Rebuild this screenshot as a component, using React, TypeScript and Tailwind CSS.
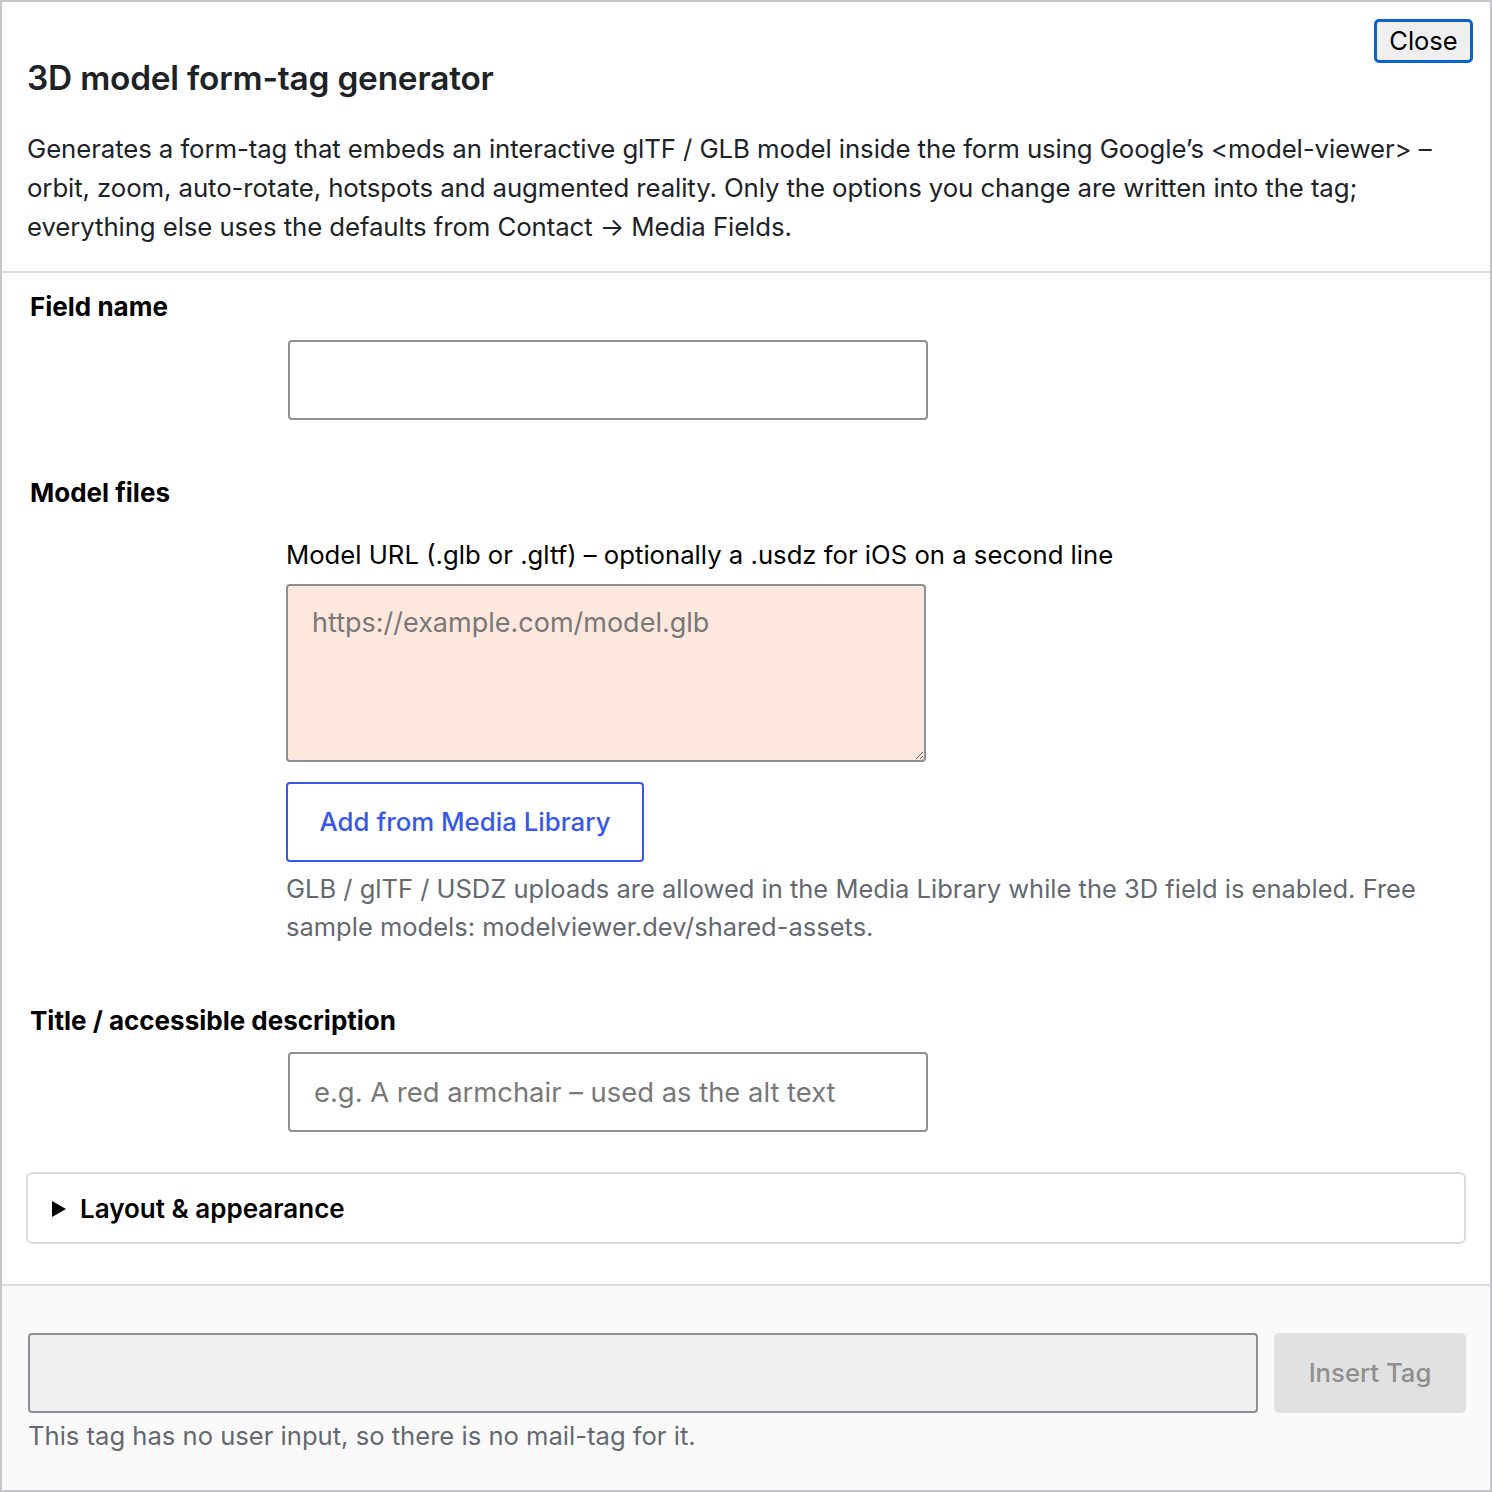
import React from "react";

export default function App() {
  return (
    <div
      className="relative w-[1492px] h-[1492px] border-2 border-[#c6c6ca] bg-white flex flex-col text-[#1d2327]"
      style={{ fontFamily: "Inter, 'Noto Sans', sans-serif" }}
    >
      <button className="absolute right-[17px] top-[17px] h-[44px] w-[99px] rounded-[5px] border-[3px] border-[#0b62d6] bg-[#efefef] text-[25.5px] leading-none text-black">
        Close
      </button>

      <div className="px-[25px] pt-[56px] pb-[25px] border-b-2 border-[#dcdcde]">
        <h1 className="text-[33.4px] leading-[40px] font-semibold tracking-[-0.2px]">3D model form-tag generator</h1>
        <p className="mt-[31px] text-[25.8px] leading-[39px] tracking-[-0.1px]">
          Generates a form-tag that embeds an interactive glTF / GLB model inside the form using Google’s &lt;model-viewer&gt; –
          <br />
          orbit, zoom, auto-rotate, hotspots and augmented reality. Only the options you change are written into the tag;
          <br />
          everything else uses the defaults from Contact → Media Fields.
        </p>
      </div>

      <div className="flex-1 px-[24px] pt-[16px]">
        <div className="pl-[4px] text-[26px] leading-[36px] font-bold text-black">Field name</div>
        <div className="ml-[262px] mt-[15px]">
          <input className="block w-[640px] h-[80px] rounded-[4px] border-2 border-[#8c8f94] bg-white" />
        </div>

        <div className="mt-[55px] pl-[4px] text-[26px] leading-[36px] font-bold text-black">Model files</div>
        <div className="ml-[260px] mt-[26px]">
          <div className="text-[25.7px] leading-[36px] text-black">Model URL (.glb or .gltf) – optionally a .usdz for iOS on a second line</div>
          <textarea
            placeholder="https://example.com/model.glb"
            className="mt-[11px] block w-[640px] h-[178px] rounded-[4px] border-2 border-[#8c8f94] bg-[#fee8de] px-[24px] py-[18px] text-[27px] leading-[38px] placeholder:text-[#787878] outline-none"
          />
          <button className="mt-[20px] block w-[358px] h-[80px] rounded-[4px] border-2 border-[#3858e9] bg-white text-[25.8px] font-medium text-[#3858e9]">
            Add from Media Library
          </button>
          <p className="mt-[8px] text-[25.5px] leading-[38px] text-[#646970]">
            GLB / glTF / USDZ uploads are allowed in the Media Library while the 3D field is enabled. Free
            <br />
            sample models: modelviewer.dev/shared-assets.
          </p>
        </div>

        <div className="mt-[57px] pl-[4px] text-[26px] leading-[36px] font-bold text-black">Title / accessible description</div>
        <div className="ml-[262px] mt-[13px]">
          <input
            placeholder="e.g. A red armchair – used as the alt text"
            className="block w-[640px] h-[80px] rounded-[4px] border-2 border-[#8c8f94] bg-white px-[24px] text-[27.4px] placeholder:text-[#787878] outline-none"
          />
        </div>

        <div className="mt-[40px] h-[72px] rounded-[6px] border-2 border-[#dcdcde] flex items-center pl-[24px] gap-[14px]">
          <svg width="14" height="16" viewBox="0 0 14 16" className="mt-[1px]">
            <path d="M0 0 L14 8 L0 16 Z" fill="#000" />
          </svg>
          <span className="text-[26px] font-semibold text-black">Layout &amp; appearance</span>
        </div>
      </div>

      <div className="mt-[40px] h-[206px] border-t-2 border-[#dcdcde] bg-[#fafafa] pl-[26px] pr-[24px] pt-[47px]">
        <div className="flex gap-[16px]">
          <input className="block flex-1 h-[80px] rounded-[4px] border-2 border-[#8c8f94] bg-[#f0f0f0]" />
          <button className="w-[192px] h-[80px] rounded-[5px] bg-[#e1e1e1] text-[25.7px] font-medium text-[#8f8f8f]">Insert Tag</button>
        </div>
        <p className="mt-[4px] text-[25.6px] leading-[38px] text-[#646970]">This tag has no user input, so there is no mail-tag for it.</p>
      </div>
    </div>
  );
}
